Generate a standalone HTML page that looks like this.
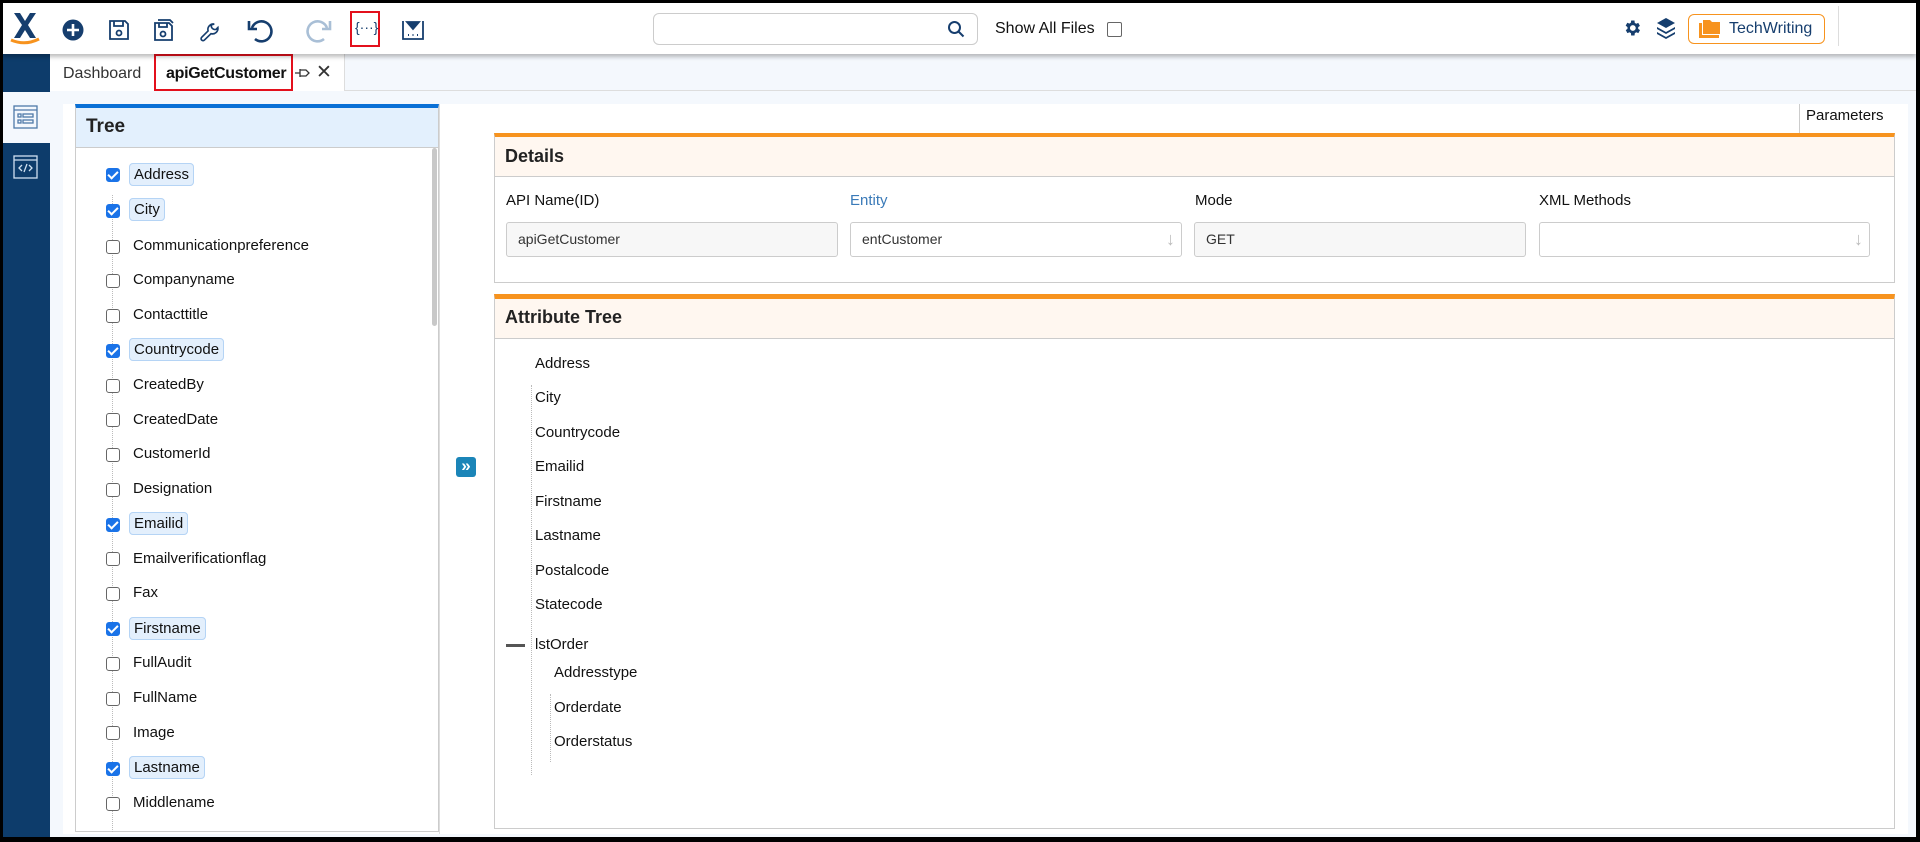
<!DOCTYPE html>
<html><head><meta charset="utf-8"><style>
*{box-sizing:border-box;margin:0;padding:0}
body{width:1920px;height:842px;overflow:hidden;background:#000;font-family:"Liberation Sans",Arial,sans-serif;color:#111;position:relative}
.a{position:absolute}
.tb{left:3px;top:3px;width:1913px;height:51px;background:#fff;box-shadow:0 3px 4px rgba(0,0,0,.25);z-index:3}
.main{left:3px;top:54px;width:1913px;height:783px;background:#f4f8fd}
.cb{width:14px;height:14px;border:1.5px solid #666;border-radius:3px;background:#fff}
.cb.on{background:#1a73e8;border-color:#1a73e8}
.cb.on:after{content:"";position:absolute;left:3px;top:0px;width:4px;height:8px;border:solid #fff;border-width:0 2px 2px 0;transform:rotate(45deg)}
.it{font-size:15px;left:133px;line-height:20px}
.hl{background:#e3effc;border:1px solid #b5d4f5;border-radius:4px;padding:2px 4px;margin-left:-4px;margin-top:-3px}
.lbl{font-size:15px;top:192px}
.inp{top:222px;height:35px;border:1px solid #ccc;border-radius:3px;font-size:14px;line-height:33px;padding-left:11px;color:#333}
.at{font-size:15px;color:#111}
</style></head><body>
<div class="a tb">
 <svg class="a" style="left:6px;top:7px" width="32" height="36" viewBox="0 0 32 36"><path d="M5 3h6l5 8 5-8h6l-8 12 8 13h-6l-5-8-5 8H5l8-13z" fill="#163e6e"/><path d="M2 30q14 6 28-1" stroke="#f7931e" stroke-width="3" fill="none"/></svg>
 <svg class="a" style="left:59px;top:16px" width="22" height="22" viewBox="0 0 22 22"><circle cx="11" cy="11" r="10.5" fill="#163e6e"/><path d="M11 5v12M5 11h12" stroke="#fff" stroke-width="2.6"/></svg>
 <svg class="a" style="left:105px;top:16px" width="22" height="22" viewBox="0 0 22 22" fill="none" stroke="#163e6e" stroke-width="1.8"><path d="M2 2h15l3 3v15H2z"/><path d="M6 2v5h9V2"/><circle cx="11" cy="14" r="2.5"/></svg>
 <svg class="a" style="left:150px;top:15px" width="22" height="24" viewBox="0 0 22 24" fill="none" stroke="#163e6e" stroke-width="1.8"><path d="M2 5h14l3 3v14H2z"/><path d="M6 5v4h8V5M5 2h12l3 3"/><circle cx="10" cy="16" r="2.5"/></svg>
 <svg class="a" style="left:195px;top:15px" width="22" height="24" viewBox="0 0 24 24" fill="none" stroke="#163e6e" stroke-width="1.8"><path d="M14.7 6.3a4 4 0 0 0 5 5l2-2a6 6 0 0 1-7.5 6.7L7 23a2.1 2.1 0 0 1-3-3l7-7A6 6 0 0 1 17.7 5.5z"/></svg>
 <svg class="a" style="left:243px;top:15px" width="28" height="26" viewBox="0 0 28 26" fill="none" stroke="#163e6e" stroke-width="2.6"><path d="M6 10a10 10 0 1 1 3 11"/><path d="M3 3v8h8" /></svg>
 <svg class="a" style="left:302px;top:15px" width="28" height="26" viewBox="0 0 28 26" fill="none" stroke="#a9bfd6" stroke-width="2.6"><path d="M22 10a10 10 0 1 0-3 11"/><path d="M25 3v8h-8"/></svg>
 <div class="a" style="left:347px;top:8px;width:30px;height:36px;border:2.5px solid #e3101c"></div>
 <div class="a" style="left:352px;top:16px;font-size:14px;color:#163e6e">{···}</div>
 <svg class="a" style="left:399px;top:17px" width="22" height="20" viewBox="0 0 22 20" fill="none" stroke="#163e6e" stroke-width="1.8"><path d="M1 1v18h20V1"/><path d="M5 2h12l-6 7z" fill="#163e6e"/><path d="M6 15h1M10.5 15h1M15 15h1" stroke-width="2"/></svg>
 <div class="a" style="left:650px;top:10px;width:325px;height:32px;border:1px solid #ccc;border-radius:6px"></div>
 <svg class="a" style="left:944px;top:17px" width="18" height="18" viewBox="0 0 18 18" fill="none" stroke="#163e6e" stroke-width="2"><circle cx="7.5" cy="7.5" r="5.5"/><path d="M11.5 11.5l5 5"/></svg>
 <div class="a" style="left:992px;top:17px;font-size:16px">Show All Files</div>
 <div class="a cb" style="left:1104px;top:19px;border-radius:2px;width:15px;height:15px"></div>
 <svg class="a" style="left:1619px;top:15px" width="20" height="20" viewBox="0 0 24 24"><path fill="#163e6e" d="M19.4 13a7.5 7.5 0 0 0 0-2l2.1-1.6-2-3.5-2.5 1a7 7 0 0 0-1.7-1L15 3h-4l-.4 2.7a7 7 0 0 0-1.7 1l-2.5-1-2 3.5L6.6 11a7.5 7.5 0 0 0 0 2l-2.1 1.6 2 3.5 2.5-1a7 7 0 0 0 1.7 1L11 21h4l.4-2.9a7 7 0 0 0 1.7-1l2.5 1 2-3.5zM13 15.5a3.5 3.5 0 1 1 0-7 3.5 3.5 0 0 1 0 7z"/></svg>
 <svg class="a" style="left:1653px;top:14px" width="20" height="22" viewBox="0 0 20 22" fill="#163e6e"><path d="M10 1l9 5-9 5-9-5z"/><path d="M1 10l9 5 9-5v2l-9 5-9-5z"/><path d="M1 15l9 5 9-5v2l-9 5-9-5z"/></svg>
 <div class="a" style="left:1685px;top:11px;width:137px;height:30px;border:1.5px solid #f7931e;border-radius:6px"></div>
 <svg class="a" style="left:1696px;top:17px" width="22" height="18" viewBox="0 0 22 18"><path d="M0 3h3v12h17v3H0z" fill="#f7931e"/><path d="M4 0h7l2 2h8v12H4z" fill="#f7931e"/></svg>
 <div class="a" style="left:1726px;top:17px;font-size:16px;color:#163e6e">TechWriting</div>
 <div class="a" style="left:1835px;top:3px;width:1px;height:40px;background:#ddd"></div>
</div>
<div class="a main"></div>
<div class="a" style="left:3px;top:54px;width:47px;height:783px;background:#0d3c6b"></div>
<div class="a" style="left:3px;top:92px;width:47px;height:51px;background:#f4f8fd"></div>
<svg class="a" style="left:13px;top:105px" width="25" height="24" viewBox="0 0 25 24" fill="none" stroke="#4f79a8" stroke-width="1.3"><rect x="1" y="1" width="23" height="22"/><path d="M1 5h23"/><rect x="5" y="9" width="3" height="3"/><rect x="5" y="15" width="3" height="3"/><rect x="10" y="9" width="10" height="3"/><rect x="10" y="15" width="10" height="3"/></svg>
<svg class="a" style="left:13px;top:155px" width="25" height="24" viewBox="0 0 25 24" fill="none" stroke="#cfe0f0" stroke-width="1.3"><rect x="1" y="1" width="23" height="22"/><path d="M1 5h23"/><path d="M9 10l-3 3 3 3M16 10l3 3-3 3M14 9l-3 8"/></svg>
<div class="a" style="left:50px;top:54px;width:295px;height:37px;background:#fff;border-right:1px solid #ddd"></div>
<div class="a" style="left:345px;top:90px;width:1571px;height:1px;background:#ddd"></div>
<div class="a" style="left:63px;top:65px;font-size:16px;color:#333">Dashboard</div>
<div class="a" style="left:154px;top:54px;width:139px;height:37px;border:2.5px solid #e3101c"></div>
<div class="a" style="left:166px;top:65px;font-size:16px;color:#111;font-weight:bold;letter-spacing:-0.3px">apiGetCustomer</div>
<svg class="a" style="left:295px;top:67px" width="16" height="12" viewBox="0 0 16 12" fill="none" stroke="#333" stroke-width="1.3"><path d="M0 6h5M5 2v8M5 3h6l3 3-3 3H5"/></svg>
<div class="a" style="left:316px;top:61px;font-size:19px;color:#333">✕</div>
<div class="a" style="left:63px;top:104px;width:376px;height:730px;background:#fff"></div>
<div class="a" style="left:75px;top:104px;width:364px;height:728px;background:#fff;border:1px solid #ccc;border-top:4px solid #0a70d6"></div>
<div class="a" style="left:76px;top:108px;width:362px;height:40px;background:#e3f0fd;border-bottom:1px solid #ccc"></div>
<div class="a" style="left:86px;top:116px;font-size:19px;font-weight:bold;color:#222">Tree</div>
<div class="a" style="left:432px;top:148px;width:5px;height:178px;background:#c8c8c8;border-radius:3px"></div>
<div class="a" style="left:112px;top:195px;height:637px;border-left:1px dotted #bbb"></div>
<div class="a cb on" style="left:106px;top:168px"></div><div class="a it" style="top:165px"><span class="hl">Address</span></div>
<div class="a cb on" style="left:106px;top:204px"></div><div class="a it" style="top:200px"><span class="hl">City</span></div>
<div class="a cb" style="left:106px;top:240px"></div><div class="a it" style="top:236px">Communicationpreference</div>
<div class="a cb" style="left:106px;top:274px"></div><div class="a it" style="top:270px">Companyname</div>
<div class="a cb" style="left:106px;top:309px"></div><div class="a it" style="top:305px">Contacttitle</div>
<div class="a cb on" style="left:106px;top:344px"></div><div class="a it" style="top:340px"><span class="hl">Countrycode</span></div>
<div class="a cb" style="left:106px;top:379px"></div><div class="a it" style="top:375px">CreatedBy</div>
<div class="a cb" style="left:106px;top:413px"></div><div class="a it" style="top:410px">CreatedDate</div>
<div class="a cb" style="left:106px;top:448px"></div><div class="a it" style="top:444px">CustomerId</div>
<div class="a cb" style="left:106px;top:483px"></div><div class="a it" style="top:479px">Designation</div>
<div class="a cb on" style="left:106px;top:518px"></div><div class="a it" style="top:514px"><span class="hl">Emailid</span></div>
<div class="a cb" style="left:106px;top:552px"></div><div class="a it" style="top:549px">Emailverificationflag</div>
<div class="a cb" style="left:106px;top:587px"></div><div class="a it" style="top:583px">Fax</div>
<div class="a cb on" style="left:106px;top:622px"></div><div class="a it" style="top:619px"><span class="hl">Firstname</span></div>
<div class="a cb" style="left:106px;top:657px"></div><div class="a it" style="top:653px">FullAudit</div>
<div class="a cb" style="left:106px;top:692px"></div><div class="a it" style="top:688px">FullName</div>
<div class="a cb" style="left:106px;top:726px"></div><div class="a it" style="top:723px">Image</div>
<div class="a cb on" style="left:106px;top:762px"></div><div class="a it" style="top:758px"><span class="hl">Lastname</span></div>
<div class="a cb" style="left:106px;top:797px"></div><div class="a it" style="top:793px">Middlename</div>
<div class="a" style="left:439px;top:104px;width:55px;height:730px;background:#fff;border-left:1px solid #ddd"></div>
<div class="a" style="left:456px;top:457px;width:20px;height:20px;background:#1b85b8;border-radius:3px;color:#fff;font-size:17px;line-height:18px;text-align:center;font-weight:bold">»</div>
<div class="a" style="left:494px;top:104px;width:1414px;height:730px;background:#fff"></div>
<div class="a" style="left:1799px;top:104px;width:1px;height:29px;background:#ccc"></div>
<div class="a" style="left:1806px;top:107px;font-size:15px">Parameters</div>
<div class="a" style="left:494px;top:133px;width:1401px;height:150px;border:1px solid #ccc;border-top:4px solid #f7931e"></div>
<div class="a" style="left:495px;top:137px;width:1399px;height:40px;background:#fff7f0;border-bottom:1px solid #ccc"></div>
<div class="a" style="left:505px;top:146px;font-size:18px;font-weight:bold;color:#222">Details</div>
<div class="a lbl" style="left:506px">API Name(ID)</div>
<div class="a lbl" style="left:850px;color:#3a7ab8">Entity</div>
<div class="a lbl" style="left:1195px">Mode</div>
<div class="a lbl" style="left:1539px">XML Methods</div>
<div class="a inp" style="left:506px;width:332px;background:#f7f7f7">apiGetCustomer</div>
<div class="a inp" style="left:850px;width:332px;background:#fff">entCustomer<span style="position:absolute;right:6px;top:0;color:#bbb;font-size:18px">↓</span></div>
<div class="a inp" style="left:1194px;width:332px;background:#f7f7f7">GET</div>
<div class="a inp" style="left:1539px;width:331px;background:#fff"><span style="position:absolute;right:6px;top:0;color:#bbb;font-size:18px">↓</span></div>
<div class="a" style="left:494px;top:294px;width:1401px;height:535px;border:1px solid #ccc;border-top:5px solid #f7931e"></div>
<div class="a" style="left:495px;top:299px;width:1399px;height:40px;background:#fff7f0;border-bottom:1px solid #ccc"></div>
<div class="a" style="left:505px;top:307px;font-size:18px;font-weight:bold;color:#222">Attribute Tree</div>
<div class="a" style="left:531px;top:385px;height:390px;border-left:1px dotted #bbb"></div>
<div class="a" style="left:550px;top:694px;height:68px;border-left:1px dotted #bbb"></div>
<div class="a at" style="left:535px;top:355px">Address</div>
<div class="a at" style="left:535px;top:389px">City</div>
<div class="a at" style="left:535px;top:424px">Countrycode</div>
<div class="a at" style="left:535px;top:458px">Emailid</div>
<div class="a at" style="left:535px;top:493px">Firstname</div>
<div class="a at" style="left:535px;top:527px">Lastname</div>
<div class="a at" style="left:535px;top:562px">Postalcode</div>
<div class="a at" style="left:535px;top:596px">Statecode</div>
<div class="a" style="left:506px;top:644px;width:19px;height:3px;background:#555"></div>
<div class="a at" style="left:535px;top:636px">lstOrder</div>
<div class="a at" style="left:554px;top:664px">Addresstype</div>
<div class="a at" style="left:554px;top:699px">Orderdate</div>
<div class="a at" style="left:554px;top:733px">Orderstatus</div>
</body></html>
